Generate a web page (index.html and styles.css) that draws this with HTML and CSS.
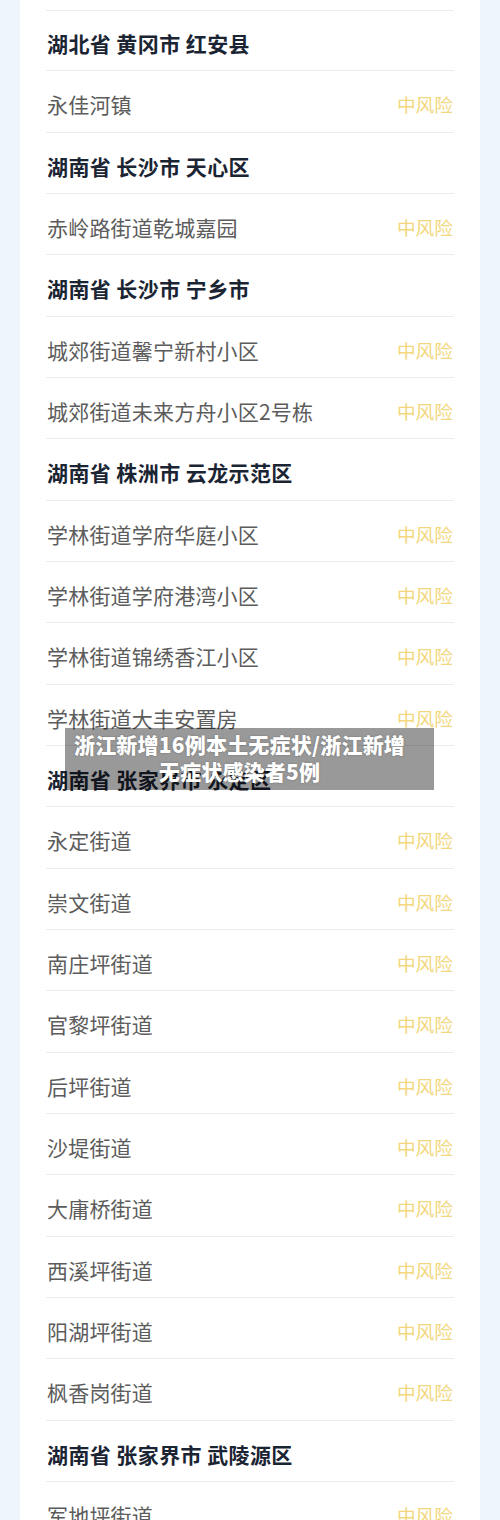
FILE: index.html
```html
<!DOCTYPE html>
<html lang="zh-CN">
<head>
<meta charset="utf-8">
<title>风险地区</title>
<link rel="stylesheet" href="styles.css">
</head>
<body>
<div class="page">
  <div class="card">
    <ul class="list">
      <li class="row head">湖北省 黄冈市 红安县</li>
      <li class="row"><span class="name">永佳河镇</span><span class="risk">中风险</span></li>
      <li class="row head">湖南省 长沙市 天心区</li>
      <li class="row"><span class="name">赤岭路街道乾城嘉园</span><span class="risk">中风险</span></li>
      <li class="row head">湖南省 长沙市 宁乡市</li>
      <li class="row"><span class="name">城郊街道馨宁新村小区</span><span class="risk">中风险</span></li>
      <li class="row"><span class="name">城郊街道未来方舟小区2号栋</span><span class="risk">中风险</span></li>
      <li class="row head">湖南省 株洲市 云龙示范区</li>
      <li class="row"><span class="name">学林街道学府华庭小区</span><span class="risk">中风险</span></li>
      <li class="row"><span class="name">学林街道学府港湾小区</span><span class="risk">中风险</span></li>
      <li class="row"><span class="name">学林街道锦绣香江小区</span><span class="risk">中风险</span></li>
      <li class="row"><span class="name">学林街道大丰安置房</span><span class="risk">中风险</span></li>
      <li class="row head">湖南省 张家界市 永定区</li>
      <li class="row"><span class="name">永定街道</span><span class="risk">中风险</span></li>
      <li class="row"><span class="name">崇文街道</span><span class="risk">中风险</span></li>
      <li class="row"><span class="name">南庄坪街道</span><span class="risk">中风险</span></li>
      <li class="row"><span class="name">官黎坪街道</span><span class="risk">中风险</span></li>
      <li class="row"><span class="name">后坪街道</span><span class="risk">中风险</span></li>
      <li class="row"><span class="name">沙堤街道</span><span class="risk">中风险</span></li>
      <li class="row"><span class="name">大庸桥街道</span><span class="risk">中风险</span></li>
      <li class="row"><span class="name">西溪坪街道</span><span class="risk">中风险</span></li>
      <li class="row"><span class="name">阳湖坪街道</span><span class="risk">中风险</span></li>
      <li class="row"><span class="name">枫香岗街道</span><span class="risk">中风险</span></li>
      <li class="row head">湖南省 张家界市 武陵源区</li>
      <li class="row"><span class="name">军地坪街道</span><span class="risk">中风险</span></li>
    </ul>
  </div>
  <div class="caption">浙江新增16例本土无症状/浙江新增无症状感染者5例</div>
</div>
</body>
</html>
```

FILE: styles.css
```css
html, body {
  margin: 0;
  padding: 0;
  background: #eef5fd;
  font-family: "Noto Sans CJK SC", "Noto Sans", sans-serif;
}
.page {
  position: relative;
  width: 500px;
  height: 1520px;
  overflow: hidden;
}
.card {
  margin: 0 20px;
  background: #ffffff;
  padding: 10px 26px 0;
  height: 1510px;
}
.list {
  list-style: none;
  margin: 0;
  padding: 0;
  border-top: 1px solid #ececec;
}
.row {
  box-sizing: border-box;
  height: 61.33px;
  border-bottom: 1px solid #ececec;
  display: flex;
  align-items: center;
  justify-content: space-between;
  padding: 6px 1px 0 1px;
  font-size: 21px;
  line-height: 24px;
  color: #5c5c5c;
  white-space: nowrap;
}
.name {
  letter-spacing: 0.2px;
}
.row.head {
  font-weight: 700;
  color: #1b2433;
  letter-spacing: 0.4px;
}
.list > .row:first-child {
  margin-top: -1px;
}
.risk {
  font-size: 18.7px;
  color: #f3d77e;
}
.caption {
  position: absolute;
  left: 65px;
  top: 728px;
  width: 369px;
  height: 62px;
  box-sizing: border-box;
  padding: 3px 24px 0 4px;
  background: rgba(0, 0, 0, 0.4);
  color: #ffffff;
  font-weight: 900;
  font-size: 21px;
  line-height: 27px;
  letter-spacing: 0.2px;
  text-align: center;
  text-shadow: 0 0 2px rgba(0, 0, 0, 0.3);
}
```
